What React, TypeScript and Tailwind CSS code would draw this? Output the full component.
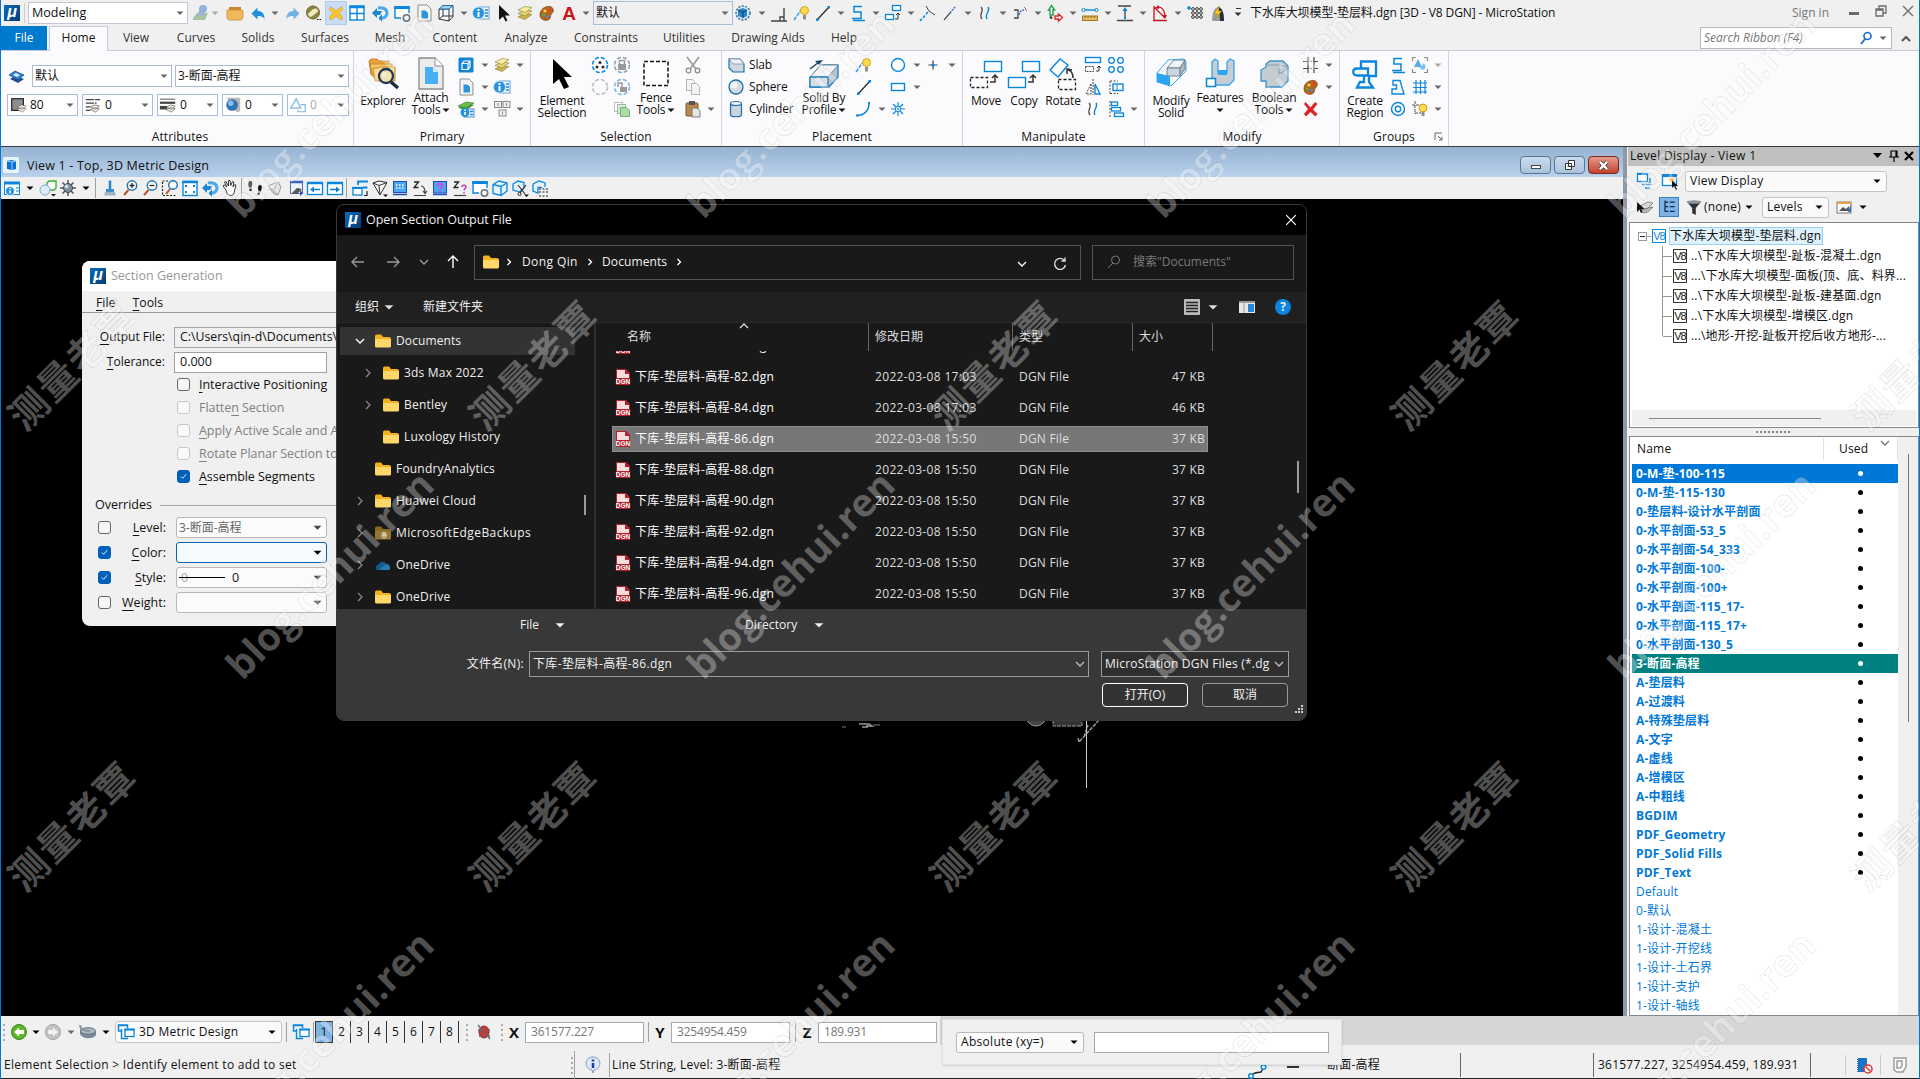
import React from 'react';

type P = { children?: React.ReactNode; className?: string };

const B = '#0a86dc';
const K = '#2b2b2b';

const shapes: Record<string, React.ReactNode> = {
  stamp: <><path d="M2 15l4-5h11l-3 7H2z" fill="#a9c2a0" /><path d="M6 13c0-3 2-3 2-6h3c0 3 2 3 2 6z" fill="#9db8cf" /><circle cx="12" cy="6" r="4" fill="#8fb4d8" /></>,
  folder: <><path d="M4 4h12v4H4z" fill="#c98a2e" /><path d="M2 7h15l1 1v7l-2 2H4l-2-2z" fill="#f0b95c" stroke="#c48a35" strokeWidth=".8" /></>,
  undo: <path d="M3.500 10.500l6-6v3.500c5 0 7 3 7 8-2-3-4-3-7-3v3.500z" fill="#1e8fdc" />,
  redo: <path d="M16.500 10.500l-6-6v3.500c-5 0-7 3-7 8 2-3 4-3 7-3v3.500z" fill="#6eb3e4" />,
  ball: <><circle cx="10" cy="9.500" r="6.500" fill="#8e8440" /><path d="M4.500 11c3-1 4-6 9-5.500l2 3c-3 1-5 5-8.500 5.500z" fill="#eee9c0" /><path d="M14 16.500h1.500M16.500 16.500H18" stroke="#111" strokeWidth="1.200" /><circle cx="10" cy="9.500" r="6.500" fill="none" stroke="#6b6224" /></>,
  bigx: <path d="M5 4l5 4 5-4 2 2-4 4 4 5-2 2-5-4-5 4-2-2 4-5-4-4z" fill="#ffc52e" stroke="#d69a1a" strokeWidth=".7" />,
  grid4: <><rect x="3" y="3" width="14" height="14" fill="#fff" stroke={B} strokeWidth="1.400" /><path d="M10 3v14M3 10.500h14" stroke={B} strokeWidth="1.400" /><path d="M2.500 4h15" stroke={B} strokeWidth="2.500" /></>,
  rotate: <><path d="M8 5c5-1 9 1 9 5 0 4-4 6-8 5" fill="none" stroke="#4aaae8" strokeWidth="3" /><path d="M2 10l5-5v3h5l-2 4H7v3z" fill="#1c86d2" /><path d="M12 11l-3 4 3 4z" fill="#1c86d2" /></>,
  winring: <><path d="M17 10V4H3v11h6" fill="#fff" stroke={B} strokeWidth="1.400" /><path d="M2.300 4.500h15.400" stroke={B} strokeWidth="3" /><circle cx="14.500" cy="15" r="3.200" fill="#f4f4f4" stroke="#6d7378" strokeWidth="1.500" /></>,
  doc: <><path d="M4 2h9l4 4v12H4z" fill="#f4f4f2" stroke="#8d8d8d" /><path d="M7.500 7.500h4l2.500 2.500v5.500H7.500z" fill="#2a94dc" /></>,
  cube: <><path d="M3 6l4-4h10v12l-4 4H3z" fill="#f4f9fc" /><path d="M3 6h10v12M13 6l4-4M3 6v10l10 2M7 2v11h10M3 16l4-3" fill="none" stroke="#333" /><path d="M3 6l4-3.500h10L13 6z" fill="#9fd2f0" stroke="#1f6ea8" /><path d="M17 2.500v11L13 18" fill="none" stroke="#333" /></>,
  info: <><rect x="8" y="4" width="10" height="12" fill="#fff" stroke="#5f9fd0" /><path d="M14 7h3M14 10h3M14 13h3" stroke={B} strokeWidth="1.500" /><circle cx="7.500" cy="10" r="6" fill="#2a92dc" stroke="#bfe0f6" /><path d="M7.500 9v5M7.500 6v2" stroke="#fff" strokeWidth="2" /></>,
  cursor: <path d="M5 2v15l4-3.500 2.500 5 2-1-2.500-5h5z" fill="#111" />,
  layers: <><path d="M3 14l7-3.500 7 1-7 5z" fill="#c9b654" stroke="#8a7b2c" strokeWidth=".6" /><path d="M3 10.500L10 7l7 1-7 5z" fill="#e6d67a" stroke="#8a7b2c" strokeWidth=".6" /><path d="M3 7l7-3.500 7 1-7 5z" fill="#f8eea2" stroke="#8a7b2c" strokeWidth=".6" /></>,
  palette: <><path d="M3 12c0-6 5-9 10-8.500 4 1 4 5 2 7-2 1-1 3-2 5-2 3-10 2.500-10-3.500z" fill="#b8641e" stroke="#7a3c0c" strokeWidth=".7" /><circle cx="8" cy="8" r="1.600" fill="#f6d14a" /><circle cx="12.500" cy="6.500" r="1.600" fill="#e0452b" /><circle cx="6.500" cy="12" r="1.600" fill="#58a84a" /><circle cx="10.500" cy="13.500" r="1.600" fill="#4a86d0" /></>,
  sphereCube: <><circle cx="10" cy="10" r="7" fill="#cfe6f6" stroke="#3d6f93" strokeDasharray="2 1.500" strokeWidth="1.500" /><path d="M5 7l5-2 4 2v6l-4 2-5-2z" fill="#2b86c8" /><path d="M5 7l5 2 4-2M10 9v6" stroke="#113c60" fill="none" /></>,
  perp: <path d="M2 18h16M15 5v13M11 18v-4h4" fill="none" stroke="#444" strokeWidth="1.400" />,
  bulb: <><path d="M2 17L9 7" stroke="#2ea0ea" strokeWidth="1.500" strokeDasharray="4 1" /><circle cx="12.500" cy="7.500" r="4" fill="#ffdb4d" stroke="#c79212" strokeWidth=".8" /><path d="M11 12h3v4.500h-3z" fill="#8f8f8f" /></>,
  line: <><path d="M4 17L16 4" stroke="#222" strokeWidth="1.200" /><path d="M3 15.500h2.500v2.500H3zM14.500 3h2.500v2.500h-2.500z" fill={B} /></>,
  sshape: <path d="M14 3.500H6v5.500h7v6.500H4M5 17.500h12" fill="none" stroke={B} strokeWidth="1.500" />,
  boxes: <><rect x="9.500" y="2.500" width="8" height="5" fill="#fff" stroke={B} strokeWidth="1.300" /><rect x="2.500" y="11.500" width="8" height="5" fill="#fff" stroke={B} strokeWidth="1.300" /><path d="M12 16h3V10M13 12l2-2 2 2" fill="none" stroke="#333" /></>,
  trim: <><path d="M2 18L10 9" stroke={B} strokeDasharray="3 1.500" strokeWidth="1.500" /><path d="M8 3l3 5 6 4" fill="none" stroke="#444" /></>,
  dash: <><path d="M10 10L4 17" stroke="#555" strokeWidth="1.200" /><path d="M10 10l5-6" stroke="#3355dd" strokeWidth="1.300" strokeDasharray="2 1" /></>,
  squig: <><path d="M6 4c4 4-3 7 1 12" fill="none" stroke="#555" strokeWidth="1.400" /><path d="M13 4c3 4-4 7-1 12" fill="none" stroke={B} strokeWidth="1.400" /></>,
  bracket: <><path d="M4 7h4v8H4" fill="none" stroke="#444" strokeWidth="1.300" /><path d="M9 12c1-4 3-5 5-5" fill="none" stroke="#2d6fe0" strokeDasharray="2 1" strokeWidth="1.500" /><path d="M14 4l2 2M17 8l-2-2" stroke="#b36b45" /></>,
  axes: <><path d="M6.500 2.500l3 4.500H8v5H5V7H3.500z" fill="#fff" stroke="#1fa04c" strokeWidth="1.400" /><path d="M17.500 14.500l-4-3.500v2H10v3h3.500v2z" fill="#fff" stroke="#e0252b" strokeWidth="1.400" /><path d="M5 13.500l2 2" stroke="#333" strokeWidth="2" /></>,
  measure: <><path d="M3 7h14" stroke={B} strokeWidth="1.400" /><circle cx="3.500" cy="7" r="1.600" fill="#fff" stroke={B} /><circle cx="16.500" cy="7" r="1.600" fill="#fff" stroke={B} /><rect x="2.500" y="13" width="15" height="4.500" fill="#e6bb63" stroke="#a37526" /><path d="M5 13v2M8 13v2M11 13v2M14 13v2" stroke="#8a5f18" /></>,
  height: <><path d="M3 3h13M2 17.500h16M10 6v8" stroke="#444" strokeWidth="1.300" /><path d="M10 4l-2.500 4h5zM9 14h2v2H9z" fill={B} /></>,
  angle: <><path d="M4 3v14M4 4l11 11M3 17.500h14" fill="none" stroke="#c4161c" strokeWidth="1.300" /><path d="M7 4c5-1 8 4 8 10" fill="none" stroke="#c4161c" strokeWidth="1.200" /><path d="M13 12h4l-2 4zM5 5l4-3v4z" fill="#c4161c" /></>,
  dotsGrid: <><path d="M2 5h4M4 3v4" stroke={B} strokeWidth="1.500" />{[8, 12, 16].map((x) => [6, 10, 14].map((y) => <circle key={x + '-' + y} cx={x} cy={y} r="1.400" fill="#fff" stroke="#333" />))}</>,
  bolt: <><path d="M4 18c0-8 2-13 6-14 4 1 6 7 6 14z" fill="#9aa1a6" /><path d="M11 4c4 2 5 7 5 14h-4z" fill="#2c3034" /><path d="M11 3l-5 8h3.500l-2.500 6 6.500-9H10z" fill="#ffc928" stroke="#a27400" strokeWidth=".5" /></>,
  level: <><path d="M3 13l5-3 9 3-6 4z" fill="#224f86" /><path d="M2 9l6-4 9 4-6 5z" fill="#2c83d8" stroke="#16477c" strokeWidth=".7" /><path d="M6 9l3-2 4 2-3 2z" fill="#d8eefa" /></>,
  swatch: <><rect x="3" y="3" width="13" height="13" fill="#8d8d8d" stroke="#222" strokeWidth="1.300" /><path d="M9 15l5-2 5 1-4 4zM9 12l5-2 5 1-4 4z" fill="#f7efe4" stroke="#666" strokeWidth=".7" /></>,
  lstyle: <><path d="M2 4h16M2 8h12M2 12h5M2 16h5" stroke="#444" strokeWidth="1.300" strokeDasharray="9 1" /><path d="M7 15l5-2 5 1-4 4zM7 12l5-2 5 1-4 4z" fill="#f7efe4" stroke="#666" strokeWidth=".8" /></>,
  lweight: <><path d="M1 3.500h17" stroke="#444" /><path d="M1 7.500h17" stroke="#444" strokeWidth="2.500" /><path d="M1 13h8" stroke="#444" strokeWidth="4" /><path d="M8 15l5-2 5 1-4 4zM8 12l5-2 5 1-4 4z" fill="#f7efe4" stroke="#666" strokeWidth=".8" /></>,
  globe: <><path d="M3 2h15v15l-4 1z" fill="#b8b8b8" /><circle cx="9" cy="10" r="6.500" fill="#2f73b8" /><circle cx="7.500" cy="8" r="3" fill="#8fc0ea" /></>,
  tri: <><path d="M2 13.500L8 3l5 10.500z" fill="none" stroke="#7cb8e6" strokeWidth="1.400" /><path d="M13 9.500h5v8h-8v-2" fill="none" stroke="#7cb8e6" strokeWidth="1.300" /></>,
  viewattr: <><rect x="2.500" y="2.500" width="15" height="15" rx="1.500" fill="#1284d6" /><path d="M6 8.500h6v6H6zM6 8.500l2-2.500h6v6l-2 2.500M12 8.500L14 6" fill="none" stroke="#fff" strokeWidth="1.200" /></>,
  models: <><path d="M2 9l9-5 7 2-8 5z" fill="#4a9a3c" /><path d="M2 7l8-4 8 1-8 5z" fill="#6dbb50" stroke="#2c7a29" strokeWidth=".6" /><rect x="8" y="10" width="10" height="8" fill="#fff" stroke="#3f8cc4" /><path d="M14 12.500h3M14 15.500h3" stroke={B} strokeWidth="1.300" /><circle cx="9" cy="13.500" r="4.500" fill="#2a92dc" /><path d="M9 13v3M9 10.500v1.500" stroke="#fff" strokeWidth="1.600" /></>,
  keys: <><g fill="#f1f1f1" stroke="#888"><rect x="2.500" y="2.500" width="7" height="6" /><rect x="11" y="2.500" width="7" height="6" /><rect x="7" y="11" width="7" height="6" /></g><path d="M6 4v3M14.500 4v3M10.500 12.500v3" stroke="#888" /></>,
  selDots: <><circle cx="10" cy="10" r="7.500" fill="none" stroke={B} strokeWidth="1.600" strokeDasharray="4 2" /><circle cx="10" cy="7.500" r="1.500" fill={K} /><circle cx="7" cy="12" r="1.500" fill={K} /><circle cx="13" cy="12" r="1.500" fill={K} /></>,
  selLock: <><circle cx="10" cy="10" r="7.500" fill="none" stroke="#8aa0b0" strokeWidth="1.600" strokeDasharray="4 2" /><path d="M6 9h8v6H6z" fill="#9a9a9a" /><path d="M7.500 9V5.500h5V9" fill="none" stroke="#9a9a9a" strokeWidth="1.500" /></>,
  selNone: <circle cx="10" cy="10" r="7.500" fill="none" stroke="#b9bfc4" strokeWidth="1.600" strokeDasharray="4 2" />,
  selUnlock: <><circle cx="10" cy="10" r="7.500" fill="none" stroke="#7ab7df" strokeWidth="1.600" strokeDasharray="4 2" /><path d="M8 10h7v5H8z" fill="#999" /><path d="M6 10V6h4v4" fill="none" stroke="#999" strokeWidth="1.500" /></>,
  pasteG: <><rect x="2.500" y="3.500" width="8" height="9" fill="#fff" stroke="#b9c2bc" /><rect x="5.500" y="5.500" width="8" height="9" fill="#dcecdc" stroke="#9bbba0" /><path d="M8.500 8.500h6l3 3v6h-9z" fill="#a9dca8" stroke="#78b07a" /></>,
  cut: <><path d="M4 2l9 12M16 2L7 14" stroke="#9a9a9a" strokeWidth="1.600" /><circle cx="5.500" cy="15.500" r="2.300" fill="none" stroke="#8d8d8d" strokeWidth="1.300" /><circle cx="14.500" cy="15.500" r="2.300" fill="none" stroke="#8d8d8d" strokeWidth="1.300" /></>,
  copyG: <><path d="M3.500 2.500h6l2 2v9h-8z" fill="#f4f4f4" stroke="#b5b5b5" /><path d="M8.500 6.500h5l3 3v8h-8z" fill="#f4f4f4" stroke="#b5b5b5" /></>,
  paste: <><rect x="3" y="4" width="12" height="13" rx="1" fill="#b98a4c" stroke="#7b5524" /><rect x="6" y="2" width="6" height="4" fill="#555" /><path d="M9 9h5l3 3v6H9z" fill="#e5e5e5" stroke="#666" strokeWidth=".8" /></>,
  slab: <><path d="M3 4h11l4 5v8H7l-4-4z" fill="#cfd8df" stroke="#1f6ea8" strokeWidth="1.200" /><path d="M3 4h11l4 5H7z" fill="#eef2f5" stroke="#6a8eab" strokeWidth=".7" /></>,
  sphere: <><circle cx="10" cy="10" r="7" fill="#d3dbe1" stroke="#1f6ea8" strokeWidth="1.300" /><circle cx="8" cy="8" r="3.500" fill="#fff" opacity=".7" /></>,
  cylinder: <><path d="M4.500 4.500v11c0 3 11 3 11 0v-11" fill="#cbd4db" stroke="#1f6ea8" strokeWidth="1.200" /><ellipse cx="10" cy="4.500" rx="5.500" ry="2" fill="#eef2f5" stroke="#1f6ea8" strokeWidth="1.200" /></>,
  arc: <><path d="M3 16.500c7 0 12-5 12-12" fill="none" stroke={B} strokeWidth="1.500" /><path d="M2 15.500h2.500v2H2zM14 3h2v2.500h-2z" fill={B} /></>,
  ellipse: <circle cx="10" cy="10" r="6.500" fill="#fff" stroke={B} strokeWidth="1.400" />,
  rect: <rect x="3.500" y="6.500" width="13" height="7" fill="#fff" stroke={B} strokeWidth="1.400" />,
  plus: <><path d="M10 5.500v9M5.500 10h9" stroke="#444" strokeWidth="1.200" /><circle cx="10" cy="10" r="1.600" fill={B} /></>,
  spark: <><path d="M10 3v14M3 10h14M5 5l10 10M15 5L5 15" stroke={B} strokeWidth="1.200" /><circle cx="10" cy="10" r="2.600" fill="#fff" stroke={B} /><circle cx="10" cy="10" r="1" fill={B} /></>,
  stretch: <><rect x="2.500" y="2.500" width="15" height="5" fill="#fff" stroke={B} strokeWidth="1.400" /><rect x="2.500" y="11.500" width="8" height="5" fill="none" stroke="#444" strokeDasharray="2 1" /><path d="M13 16h3v-5M14 13l2-2 2 2" stroke="#333" fill="none" /></>,
  array: <g fill="#fff" stroke={B} strokeWidth="1.300"><circle cx="5.500" cy="5.500" r="2.800" /><circle cx="14.500" cy="5.500" r="2.800" /><circle cx="5.500" cy="14.500" r="2.800" /><circle cx="14.500" cy="14.500" r="2.800" /></g>,
  mirror: <><path d="M8 7v10H3z" fill="none" stroke="#444" strokeDasharray="2 1" /><path d="M10 2v16" stroke="#444" strokeDasharray="2 1" /><path d="M12 7v10h5z" fill="#fff" stroke={B} strokeWidth="1.400" /></>,
  fencebox: <><path d="M4 4v13M4 4h8M4 16.500h8" stroke="#444" strokeDasharray="2 1.500" fill="none" /><rect x="7" y="7" width="10" height="6.500" fill="#fff" stroke={B} strokeWidth="1.400" /><path d="M11 7v6" stroke={B} /></>,
  align: <><path d="M4 2v16" stroke="#444" strokeDasharray="2 1.500" /><g fill="#fff" stroke={B} strokeWidth="1.300"><rect x="5.500" y="3" width="6" height="3.500" /><rect x="5.500" y="8.500" width="9" height="3.500" /><rect x="8.500" y="14" width="9" height="3.500" /></g></>,
  crossT: <><path d="M2 6.500h5M13 6.500h4M2 13.500h5M13 13.500h4M7 2v16M13 2v16" stroke="#444" strokeWidth="1.200" /><path d="M7 6.500h6M7 13.500h6" stroke="#777" strokeDasharray="1.500 1" /></>,
  redx: <path d="M4.500 3l5 5.500L14 3l2.500 2-4.500 5.500 4.500 4.500-2 2.500-5-4.500-4.500 4.500-2-2.500 4-5-4-5z" fill="#df2222" />,
  poly: <path d="M5 3.500h7l4 13.500H4v-5h4.500V8H5z" fill="none" stroke={B} strokeWidth="1.400" />,
  rings: <><circle cx="10" cy="10" r="6.500" fill="none" stroke={B} strokeWidth="1.400" /><circle cx="10" cy="10" r="2.700" fill="none" stroke={B} strokeWidth="1.400" /></>,
  dropG: <><path d="M2.500 6V2.500H6M14 2.500h3.500V6M2.500 14v3.500H6M14 17.500h3.500V14" fill="none" stroke="#8a8a8a" strokeWidth="1.200" /><path d="M8 4l4 8H4z" fill="#54aee4" /><path d="M9 12c2-1 4-2 4-4 4 2 3 7-1 7z" fill="#7cc3ec" /></>,
  hash: <path d="M6 3v14M10.500 3v14M15 3v14M3 6h14M3 10.500h14M3 15h14" stroke={B} strokeWidth="1.200" />,
  bulbG: <><path d="M2 6h9M5 2v13M5 14h6" stroke="#555" strokeDasharray="3 1" fill="none" /><circle cx="13" cy="9" r="4" fill="#ffdb4d" stroke="#c79212" strokeWidth=".8" /><path d="M11.500 13h3v4h-3z" fill="#8f8f8f" /></>,
  vinfo: <><rect x="2.500" y="4.500" width="15" height="12" fill="#fff" stroke={B} /><path d="M2 5h16" stroke={B} strokeWidth="3" /><circle cx="8" cy="13" r="4.500" fill="#2a92dc" stroke="#fff" strokeWidth=".8" /><path d="M8 12.500v3M8 10v1.300" stroke="#fff" strokeWidth="1.500" /><path d="M14 10h3M14 13h3" stroke={B} /></>,
  shapesG: <><path d="M9 5l2-2h7v7l-2 2H9z" fill="#fff" stroke="#3fae35" strokeWidth="1.400" /><circle cx="7" cy="12" r="5" fill="#dcebf5" stroke="#6fb0da" /><path d="M13 16h5l-2.500 2.500z" fill="#111" /></>,
  sun: <><path d="M10 2v16M2 10h16M4.500 4.500l11 11M15.500 4.500l-11 11" stroke="#555" strokeWidth="1.500" /><circle cx="10" cy="10" r="4.500" fill="#7d8e9c" stroke="#333" strokeWidth=".8" /><circle cx="8.500" cy="8.500" r="2" fill="#cfdde6" /></>,
  brush: <><path d="M10 2.500v9" stroke="#2487cc" strokeWidth="2.500" /><path d="M6 11h8v4H6z" fill="#3c8fc8" /><path d="M5 14h10l1 3.500H4z" fill="#9cb8c8" /></>,
  zin: <><path d="M4 17l4.500-5" stroke="#b5532a" strokeWidth="2" /><circle cx="12" cy="7.500" r="4.700" fill="#fff" stroke="#1874b8" strokeWidth="1.400" /><path d="M9.500 7.500h5M12 5v5" stroke="#222" strokeWidth="1.300" /></>,
  zout: <><path d="M4 17l4.500-5" stroke="#b5532a" strokeWidth="2" /><circle cx="12" cy="7.500" r="4.700" fill="#fff" stroke="#1874b8" strokeWidth="1.400" /><path d="M9.500 7.500h5" stroke="#222" strokeWidth="1.300" /></>,
  zwin: <><path d="M2.500 4v13.500H16M2.500 3H8" fill="none" stroke="#222" strokeDasharray="2 1.500" strokeWidth="1.200" /><path d="M6 16l4-5" stroke="#b5532a" strokeWidth="2" /><circle cx="13" cy="7" r="4.300" fill="#fff" stroke="#1874b8" strokeWidth="1.400" /></>,
  fit: <><rect x="3" y="3.500" width="14" height="14" fill="#fff" stroke={B} strokeWidth="1.400" /><path d="M2.300 4h15.400" stroke={B} strokeWidth="2.500" /><path d="M5 8h2M13 8h2M5 14h2M13 14h2" stroke={B} strokeWidth="2" /></>,
  hand: <path d="M6 12L3 8l1-1.200 3 2.200-2.500-5 1.300-.7L8.500 8V2.500H10L10.800 7.500l1.700-4 1.300.5-.8 5 1.800-2.500 1.200.8-1.500 5.500c0 3-1.500 4.700-4 4.700-3 0-4-3-4.500-5.500z" fill="#fff" stroke="#222" strokeWidth=".9" />,
  feet: <><path d="M5 3c2.500 0 2.700 3.500 1.500 6.500H4C3 7 3 3 5 3zM4.500 10.500H7L6.500 13h-2z" fill="#111" /><path d="M15 7c2.500 0 2 3.500.8 6.500h-2.500c-.5-3-.5-6.500 1.700-6.500zM12.800 14.500h2.500l-1 2.500h-2z" fill="#111" /></>,
  fly: <path d="M3 8l10-4 3 5-3 8-4-1zM3 8l10 9M13 4l-4 7" fill="#e4e4e4" stroke="#999" />,
  nav: <><rect x="5.500" y="3.500" width="12" height="12" fill="#eef4fa" stroke="#5b6fa8" /><path d="M5 4h13" stroke="#3b62c4" strokeWidth="2.500" /><path d="M7 15l5-5 5 1-5 5z" fill="#555" /><path d="M15 12l3 3-3 3z" fill="#2a4fc0" /></>,
  prev: <><rect x="2.500" y="5" width="15" height="11.500" fill="#fff" stroke={B} strokeWidth="1.300" /><path d="M2 5h16" stroke={B} strokeWidth="2.500" /><path d="M5 11.500l4-3v2.200h6v1.600H9v2.200z" fill="#117fce" /></>,
  next: <><rect x="2.500" y="5" width="15" height="11.500" fill="#fff" stroke={B} strokeWidth="1.300" /><path d="M2 5h16" stroke={B} strokeWidth="2.500" /><path d="M15 11.500l-4-3v2.200H5v1.600h6v2.200z" fill="#117fce" /></>,
  copyview: <><path d="M8 7V3.500h9.500M8 3.500h10M13 9.500h4.500" fill="none" stroke={B} strokeWidth="1.800" /><rect x="3" y="9.500" width="9" height="7.500" fill="#fff" stroke={B} strokeWidth="1.300" /><path d="M2.300 10h10.400" stroke={B} strokeWidth="2" /><path d="M14 17.500h3V13" stroke="#222" fill="none" strokeWidth="1.200" /></>,
  persp: <><path d="M3 5l6-2 8 1.500L10 17z" fill="#f8f8f8" stroke="#333" /><path d="M3 5l6 2.500 8-3M9 7.500L10 17" fill="none" stroke="#333" /><path d="M13 16.500h5L15.500 19z" fill="#111" /></>,
  calc: <><rect x="3.500" y="3.500" width="13" height="11" fill="#4aa6f0" stroke="#1c4fb8" /><path d="M6 7h8M6 10h8" stroke="#fff" strokeDasharray="1.500 1.500" strokeWidth="1.300" /><path d="M3 16.500h14" stroke="#1c4fb8" strokeWidth="1.500" /></>,
  z1: <><path d="M4 4h4.500L4 9.500h4.500" fill="none" stroke="#222" strokeWidth="1.300" /><path d="M11 8c3 0 4 2 4 7M13 13l2 2.500 2-2.500M4 17.500h12" fill="none" stroke="#444" strokeWidth="1.200" /></>,
  qbox: <><rect x="3.500" y="3.500" width="13" height="11.500" fill="#4aa6f0" stroke="#1c4fb8" /><path d="M7.500 7.500c0-2.500 5-2.500 5 0 0 2-2.500 1.800-2.500 3.500M10 12.500v1.500" fill="none" stroke="#e83ad0" strokeWidth="1.800" /><path d="M3 16.500h14" stroke="#1c4fb8" strokeWidth="1.500" /></>,
  z2: <><path d="M4 4h4.500L4 9.500h4.500" fill="none" stroke="#222" strokeWidth="1.300" /><path d="M12 9c0-2.500 4-2.500 4 0 0 1.800-2 1.800-2 3.500M14 14v1.500" fill="none" stroke="#c23ab0" strokeWidth="1.500" /><path d="M4 17.500h12" stroke="#444" strokeWidth="1.200" /></>,
  boxB: <><path d="M3 6.500L9 3l8 2v8l-6 4.500-8-2z" fill="#e3f3fc" stroke={B} strokeWidth="1.300" /><path d="M3 6.500l8 2L17 5M11 8.500v9" fill="none" stroke={B} strokeWidth="1.300" /></>,
  boxCut: <><path d="M3 6l5-3 6 1.500V10l-4.500 4L3 12z" fill="#e3f3fc" stroke={B} strokeWidth="1.300" /><path d="M8 7l7 9M16 7l-6 8" stroke="#333" strokeWidth="1.200" /><circle cx="9.500" cy="16" r="1.500" fill="none" stroke="#333" /><path d="M14 16.500h5L16.500 19z" fill="#111" /></>,
  boxDash: <><path d="M3 6l6-3 6 2v4M3 6v7l5 2V9.500h4" fill="#e3f3fc" stroke={B} strokeWidth="1.300" /><path d="M9 11h9M9 14h9M9 18h9" stroke="#222" strokeDasharray="2 1.500" /></>,
  panelA: <><rect x="2.500" y="2.500" width="10" height="8" fill="#fff" stroke={B} strokeWidth="1.300" /><path d="M2 3h11" stroke={B} strokeWidth="2" /><path d="M15 7v6.500H7M15 17h-5" stroke={B} strokeWidth="1.300" fill="none" strokeDasharray="5 1" /></>,
  panelB: <><rect x="2.500" y="4.500" width="14" height="10" fill="#fff" stroke={B} strokeWidth="1.300" /><path d="M2 4.500h15" stroke={B} strokeWidth="3" /><path d="M9 8.500h6M12 5.500v6M10 6.500l4 4M14 6.500l-4 4" stroke="#f2a12c" /><path d="M12 9v8l2-2 2 4 1-.5-1.500-3.500H18z" fill="#111" /></>,
  layersC: <><path d="M5 14l8-3 5-1-5 5-4 1z" fill="#bbb" stroke="#666" strokeWidth=".7" /><path d="M5 9l8-4 5 1-5 5-7 2z" fill="#d8d8d8" stroke="#666" strokeWidth=".7" /><path d="M2 5v10l2.500-2.500L6 16l1.500-.7L6 12h3.500z" fill="#111" /></>,
  tree: <path d="M5 2v14M5 4h4M11 4h6M5 9.500h4M11 9.500h6M5 15.500h4M11 15.500h6" stroke="#0b2a4a" strokeWidth="1.500" />,
  funnel: <><path d="M2 4h16l-6 7v8l-4-2v-6z" fill="#30343a" /><ellipse cx="10" cy="4.500" rx="8" ry="2" fill="#8c949c" /></>,
  pic: <><rect x="3" y="5" width="14" height="11" fill="#fff" stroke="#777" /><path d="M3 6h14" stroke="#eda04a" strokeWidth="2" /><path d="M5 14l4-4 3 2 3-3v5z" fill="#555" /><path d="M17 7v8h-3z" fill="#2a6fd8" /></>,
  back: <><circle cx="10" cy="10" r="7.500" fill="#5fb52a" stroke="#3c7d1c" /><path d="M5 10l5-4.500V8h5v4h-5v2.500z" fill="#fff" /></>,
  fwd: <><circle cx="10" cy="10" r="7.500" fill="#c4c4c4" stroke="#a0a0a0" /><path d="M15 10l-5-4.500V8H5v4h5v2.500z" fill="#f2f2f2" /></>,
  stack: <><path d="M2 7v5c2 5 13 6 16 1V9z" fill="#7b8b97" /><ellipse cx="10" cy="9" rx="7.500" ry="3.300" fill="#a9b7c0" stroke="#66747f" /><path d="M2 3c0 5 4 6 10 6" stroke="#8494a0" strokeWidth="2" fill="none" /></>,
  viewgrp: <><path d="M5 9H2.500V3h9v3M2 3.500h10" fill="none" stroke={B} strokeWidth="1.500" /><rect x="9" y="7.500" width="9" height="7" fill="#fff" stroke={B} strokeWidth="1.300" /><path d="M8.300 7.500h10.400" stroke={B} strokeWidth="2" /><path d="M5.500 7v9.500H12" fill="none" stroke={B} strokeWidth="1.400" /></>,
  bug: <><ellipse cx="10" cy="10" rx="5" ry="6" fill="#c83a3a" stroke="#8d2a2a" /><path d="M4 3l12 14M4 8h3M13 8h3M5 14h3M13 14h3" stroke="#666" strokeWidth="1.300" /></>,
  infoB: <><path d="M10 2c9 0 9 12 1 13l-1 3-1-3C1 14 1 2 10 2z" fill="#dce9f7" stroke="#7f9ec4" /><path d="M10 8v5M10 4.500v2" stroke="#1a3f9c" strokeWidth="2.500" /></>,
  snap: <><path d="M3 15l5-3 6-1 3-5" stroke="#222" strokeWidth="1.400" fill="none" /><circle cx="4" cy="15" r="2.300" fill="#fff" stroke={B} strokeWidth="1.500" /><circle cx="16.500" cy="6" r="2.300" fill="#fff" stroke={B} strokeWidth="1.500" /></>,
  note: <><path d="M3 3h10v14H3z" fill="#1b73c4" /><path d="M3.500 3v14" stroke="#fff" strokeDasharray="1 1" /><circle cx="14" cy="14" r="4" fill="#fff" stroke="#d33" strokeWidth="1.500" /><path d="M11.500 11.500l5 5" stroke="#d33" strokeWidth="1.500" /></>,
  shield: <><path d="M4 3h12v9l-3 5H7l-3-2z" fill="#fff" stroke="#9c9c9c" strokeWidth="1.500" /><path d="M7 6h5v5l-2 2H7z" fill="none" stroke="#9c9c9c" strokeWidth="1.500" /></>,
};

const I = ({ n, className = 'h-5 w-5' }: { n: string; className?: string }) => (
  <svg viewBox="0 0 20 20" className={`shrink-0 ${className.includes('w-') ? '' : 'h-5 w-5'} ${className}`}>{shapes[n]}</svg>
);
const Arr = ({ className = 'text-[#666]' }: { className?: string }) => (
  <svg viewBox="0 0 8 8" className={`shrink-0 ${className.includes('w-[') ? '' : 'h-2 w-2'} ${className}`}><path d="M.5 2.500h7L4 6z" fill="currentColor" /></svg>
);
const Big = ({ children, className = '' }: P) => <svg viewBox="0 0 36 36" className={`h-9 w-9 shrink-0 ${className}`}>{children}</svg>;
const Mu = ({ className = '' }: { className?: string }) => (
  <div className={`flex h-4 w-4 shrink-0 items-center justify-center bg-gradient-to-br from-[#0b6cb8] to-[#063a78] font-['Liberation_Sans',sans-serif] text-[16px] leading-none font-bold text-white italic ${className}`}><span className="-mt-[3px]">μ</span></div>
);

const Combo = ({ children, className = '', arrow = 'text-[#666] mr-[3px]' }: P & { arrow?: string }) => (
  <div className={`flex shrink-0 items-center justify-between border whitespace-nowrap ${className}`}>
    <div className="flex items-center">{children}</div>
    <Arr className={arrow} />
  </div>
);

const quick: [string, string][] = [
  ['stamp', 'ml-[3px]'], ['-', 'ml-0 text-[#aaa]'], ['folder', 'ml-[6px]'], ['undo', 'ml-[3px]'], ['-', 'ml-[3px]'], ['redo', 'ml-1'], ['ball', ''],
];
const quick2: [string, string][] = [
  ['grid4', ''], ['rotate', 'ml-[3px]'], ['winring', 'ml-[2px]'], ['doc', 'ml-[2px]'], ['cube', 'ml-[2px]'], ['-', 'ml-1'], ['info', 'ml-[3px]'], ['cursor', 'ml-[3px]'], ['layers', 'ml-px'], ['palette', 'ml-[2px]'],
];
const quick3: [string, string][] = [
  ['sphereCube', ''], ['-', 'ml-[5px]'], ['perp', 'ml-[3px]'], ['bulb', 'ml-[3px]'], ['line', 'ml-px'], ['-', 'ml-1'], ['sshape', 'ml-[3px]'], ['-', 'ml-1'], ['boxes', 'ml-[3px]'], ['-', 'ml-1'], ['trim', 'ml-[3px]'], ['dash', 'ml-[2px]'], ['-', 'ml-1'], ['squig', 'ml-[3px]'], ['-', 'ml-1'], ['bracket', 'ml-[3px]'], ['-', 'ml-1'], ['axes', 'ml-[3px]'], ['-', 'ml-1'], ['measure', 'ml-[3px]'], ['-', 'ml-1'], ['height', 'ml-[3px]'], ['-', 'ml-1'], ['angle', 'ml-[3px]'], ['-', 'ml-1'], ['dotsGrid', 'ml-[3px]'], ['bolt', 'ml-[3px]'],
];
const Icons = ({ list }: { list: [string, string][] }) => (
  <>{list.map(([n, c], i) => (n === '-' ? <Arr key={i} className={c.includes('text-') ? c : `${c} text-[#666]`} /> : <I key={i} n={n} className={c} />))}</>
);

const TitleBar = () => (
  <div className="flex h-[26px] items-center">
    <Mu className="ml-[3px]" />
    <div className="ml-1 h-5 w-px bg-[#ccc]" />
    <Combo className="ml-[3px] h-[22px] w-[160px] border-[#c3c6d4] bg-white pl-[3px] text-[12.500px]">Modeling</Combo>
    <Icons list={quick} />
    <div className="ml-[2px] flex h-6 w-[22px] items-center justify-center border border-[#b4cbee] bg-[#c9dcf5]"><I n="bigx" /></div>
    <Icons list={quick2} />
    <span className="ml-[2px] w-5 text-center font-['Liberation_Sans',sans-serif] text-[19px] leading-none font-bold text-[#c8161d]">A</span>
    <Arr className="ml-[3px] text-[#666]" />
    <Combo className="ml-[3px] h-6 w-[140px] border-[#a9bcdc] bg-[#f0f0f0] pl-[2px]">默认</Combo>
    <Icons list={quick3} />
    <div className="ml-[6px] flex w-2 flex-col items-center"><div className="mb-px h-px w-[5px] bg-[#333]" /><Arr className="text-[#333]" /></div>
    <span className="ml-2 w-[310px] text-[12px] tracking-[-0.1px] whitespace-nowrap">下水库大坝模型-垫层料.dgn [3D - V8 DGN] - MicroStation</span>
    <div className="ml-auto flex items-center pr-[5px] text-[#777]">
      <span className="mr-5 text-[12px]">Sign in</span>
      <div className="mr-4 h-[3px] w-[10px] bg-[#6a6a6a]" />
      <svg viewBox="0 0 12 12" className="-mt-1 mr-[15px] h-3 w-3"><path d="M1 4h7v7H1zM4 4V1h7v7H8M1 5h7" fill="none" stroke="#6a6a6a" strokeWidth="1.300" /></svg>
      <svg viewBox="0 0 12 12" className="-mt-1 h-3 w-3"><path d="M1 1l10 10M11 1L1 11" stroke="#777" strokeWidth="1.500" /></svg>
    </div>
  </div>
);

const tabs: [string, string][] = [['View', 'w-[56px]'], ['Curves', 'w-[64px]'], ['Solids', 'w-[60px]'], ['Surfaces', 'w-[74px]'], ['Mesh', 'w-[56px]'], ['Content', 'w-[74px]'], ['Analyze', 'w-[68px]'], ['Constraints', 'w-[92px]'], ['Utilities', 'w-[64px]'], ['Drawing Aids', 'w-[104px]'], ['Help', 'w-[48px]']];

const Tabs = () => (
  <div className="flex h-[25px] border-b border-[#c9c9dd]">
    <div className="flex h-6 w-[46px] items-center justify-center bg-[#007acc] text-white">File</div>
    <div className="-mb-px ml-[2px] flex h-[25px] w-[59px] items-center justify-center border border-b-0 border-[#c9c9dd] bg-[#fbfbfd] pb-[2px]">Home</div>
    {tabs.map(([t, w]) => <div key={t} className={`flex items-center justify-center whitespace-nowrap text-[#333] ${w}`}>{t}</div>)}
    <div className="mt-px ml-auto flex h-[22px] w-[192px] items-center border border-[#b9b9b9] bg-white pl-[3px] text-[#777] italic">
      <span className="whitespace-nowrap">Search Ribbon (F4)</span>
      <svg viewBox="0 0 14 14" className="ml-auto h-[14px] w-[14px]"><circle cx="8.500" cy="5" r="3.500" fill="none" stroke="#1f6fc4" strokeWidth="1.700" /><path d="M6 8l-4 5" stroke="#1f6fc4" strokeWidth="2" /></svg>
      <Arr className="mr-1 ml-[6px] text-[#666]" />
    </div>
    <svg viewBox="0 0 12 12" className="mt-[7px] mr-[7px] ml-2 h-3 w-3"><path d="M2 8l4-4 4 4" fill="none" stroke="#555" strokeWidth="2" /></svg>
  </div>
);

const Group = ({ label, className = '', children, launcher }: P & { label: string; launcher?: boolean }) => (
  <div className={`flex flex-col border-r border-[#d3d3e2] ${className}`}>
    <div className="flex h-[75px] pt-1">{children}</div>
    <div className="mt-[3px] flex h-4 items-center justify-center">
      <span className="tracking-[0.1px]">{label}</span>
      {launcher && <svg viewBox="0 0 10 10" className="-mr-[29px] ml-[19px] h-[10px] w-[10px]"><path d="M1 8V1h7M4 4l4 4M8 5v3H5" fill="none" stroke="#666" /></svg>}
    </div>
  </div>
);
const Col = ({ children, className = '' }: P) => <div className={`flex shrink-0 flex-col gap-[2px] ${className}`}>{children}</div>;
const ACol = ({ rows, className = '' }: { rows: number[]; className?: string }) => (
  <Col className={className}>{rows.map((r, i) => <div key={i} className="flex h-5 w-2 items-center">{r ? <Arr className={r === 2 ? 'text-[#aaa]' : 'text-[#666]'} /> : null}</div>)}</Col>
);
const Cmd = ({ icon, a, b, arrow, className = '' }: { icon: React.ReactNode; a: string; b?: string; arrow?: boolean; className?: string }) => (
  <div className={`flex shrink-0 flex-col items-center ${className}`}>
    {icon}
    <div className={`flex flex-col items-center text-[12px] leading-[12px] tracking-[-0.2px] whitespace-nowrap ${arrow ? 'mt-[1px]' : 'mt-[4px]'}`}>
      <span>{a}</span>
      <span className="flex items-center gap-[2px]">{b}{arrow && <Arr className="my-[2px]" />}</span>
    </div>
  </div>
);

const Attr = ({ n, v, className, dim }: { n: string; v: string; className: string; dim?: boolean }) => (
  <Combo className={`h-[22px] border-[#a9bcdc] bg-white ${className} ${dim ? 'text-[#a8a8a8]' : ''}`}><I n={n} className="mr-[3px] ml-px h-[18px] w-[18px]" />{v}</Combo>
);

const Ribbon = () => (
  <div className="flex h-[96px] shrink-0 border-b border-[#3c3c3c] bg-[#fbfbfd]">
    <Group label="Attributes" className="w-[353px] pl-[6px]">
      <div className="flex flex-col">
        <div className="mt-[10px] flex h-[22px] items-center">
          <I n="level" />
          <Combo className="ml-[5px] h-[22px] w-[140px] border-[#a9bcdc] bg-white pl-[2px]">默认</Combo>
          <Combo className="ml-[3px] h-[22px] w-[174px] border-[#a9bcdc] bg-white pl-[2px]">3-断面-高程</Combo>
        </div>
        <div className="mt-[7px] flex gap-[4px]">
          <Attr n="swatch" v="80" className="w-[71px]" />
          <Attr n="lstyle" v="0" className="w-[71px]" />
          <Attr n="lweight" v="0" className="w-[61px]" />
          <Attr n="globe" v="0" className="w-[61px]" />
          <Attr n="tri" v="0" dim className="w-[62px]" />
        </div>
      </div>
    </Group>
    <Group label="Primary" className="w-[177px]">
      <Cmd className="w-[58px]" a="Explorer" icon={<Big><path d="M4 6l2-2h6l2 2h10v14H6z" fill="#e8a43c" stroke="#c8842a" /><path d="M5 9h22v13H8z" fill="#f7c869" stroke="#c8842a" /><path d="M8 13h5l2-1h15v14H10z" fill="#fbdc94" stroke="#c8842a" /><path d="M26 27l7 6" stroke="#1f2d3a" strokeWidth="3.500" /><circle cx="21" cy="21" r="7" fill="#f6e3b4" stroke="#1f3a50" strokeWidth="2.300" /></Big>} />
      <Cmd className="w-[38px]" a="Attach" b="Tools" arrow icon={<Big><path d="M6 3h16l8 8v23H6z" fill="#ececec" stroke="#8c8c8c" strokeWidth="1.300" /><path d="M22 3v8h8" fill="#fff" stroke="#8c8c8c" /><path d="M12 12h8l5 5v12H12z" fill="#45b0f4" /><path d="M20 12v5h5z" fill="#cfeafc" /></Big>} />
      <Col className="ml-[6px]"><I n="viewattr" /><I n="doc" /><I n="models" /></Col>
      <ACol rows={[1, 1, 1]} className="ml-[5px]" />
      <Col className="ml-[3px]"><I n="layers" /><I n="info" /><I n="keys" /></Col>
      <ACol rows={[1, 0, 1]} className="ml-1" />
    </Group>
    <Group label="Selection" className="w-[191px]">
      <Cmd className="ml-[3px] w-14" a="Element" b="Selection" icon={<Big><path d="M9 4v25l6-5 5 10 5-2-5-10h8z" fill="#000" /></Big>} />
      <Col><I n="selDots" /><I n="selNone" /></Col>
      <Col className="ml-[2px]"><I n="selLock" /><I n="selUnlock" /><I n="pasteG" /></Col>
      <Cmd className="w-12" a="Fence" b="Tools" arrow icon={<Big><rect x="6" y="6.500" width="24" height="24" fill="#fff" stroke="#111" strokeWidth="1.500" strokeDasharray="4 2" /></Big>} />
      <Col className="ml-[3px]"><I n="cut" /><I n="copyG" /><I n="paste" /></Col>
      <ACol rows={[0, 0, 1]} className="ml-1" />
    </Group>
    <Group label="Placement" className="w-[241px]">
      <Col className="ml-1 w-[71px]">
        {[['slab', 'Slab'], ['sphere', 'Sphere'], ['cylinder', 'Cylinder']].map(([n, t]) => <div key={n} className="flex h-5 items-center gap-[3px] tracking-[-0.2px]"><I n={n} />{t}</div>)}
      </Col>
      <Cmd className="w-[54px]" a="Solid By" b="Profile" arrow icon={<Big><path d="M4 23l11-13h17v12l-9 10H4z" fill="#b9c2c9" stroke="#1f7fc0" strokeWidth="1.300" /><path d="M4 22l11-12h17L22 22z" fill="#f3f5f6" stroke="#7b8b97" /><path d="M4 22h18v10H4z" fill="#d9e0e5" stroke="#1f7fc0" strokeWidth="1.300" /><path d="M4 14L13 7" stroke="#1c4666" strokeWidth="1.500" /><path d="M17 5l-4 5-4-4z" fill="#1c4666" /></Big>} />
      <Col className="ml-[3px]"><I n="bulb" /><I n="line" /><I n="arc" /></Col>
      <ACol rows={[0, 0, 1]} className="ml-1" />
      <Col className="ml-[2px]"><I n="ellipse" /><I n="rect" /><I n="spark" /></Col>
      <ACol rows={[1, 1, 0]} className="ml-[5px]" />
      <Col className="ml-[2px]"><I n="plus" /></Col>
      <ACol rows={[1, 0, 0]} className="ml-[5px]" />
    </Group>
    <Group label="Manipulate" className="w-[182px]">
      <Cmd className="ml-1 w-[38px]" a="Move" icon={<Big><rect x="16.500" y="6.500" width="17" height="10" fill="#fff" stroke={B} strokeWidth="1.400" /><rect x="2.500" y="22.500" width="17" height="10" fill="none" stroke="#222" strokeWidth="1.300" strokeDasharray="3 2" /><path d="M22 27h5v-7M24 23l3-3 3 3" fill="none" stroke="#333" strokeWidth="1.500" /></Big>} />
      <Cmd className="w-[38px]" a="Copy" icon={<Big><rect x="16.500" y="6.500" width="17" height="10" fill="#fff" stroke={B} strokeWidth="1.400" /><rect x="2.500" y="22.500" width="17" height="10" fill="#fff" stroke={B} strokeWidth="1.400" /><path d="M22 27h5v-7M24 23l3-3 3 3" fill="none" stroke="#333" strokeWidth="1.500" /></Big>} />
      <Cmd className="w-10" a="Rotate" icon={<Big><path d="M5 15L15 4l8 6-10 12z" fill="#fff" stroke={B} strokeWidth="1.400" /><rect x="13.500" y="24.500" width="17" height="10" fill="none" stroke="#222" strokeWidth="1.300" strokeDasharray="3 2" /><path d="M23 15c4 1 5 4 5 8M22 19l0-5 5 1" fill="none" stroke="#333" strokeWidth="1.500" /></Big>} />
      <Col><I n="stretch" /><I n="mirror" /><I n="squig" /></Col>
      <Col className="ml-[3px]"><I n="array" /><I n="fencebox" /><I n="align" /></Col>
      <ACol rows={[0, 0, 1]} className="ml-1" />
    </Group>
    <Group label="Modify" className="w-[195px]">
      <Cmd className="ml-1 w-11" a="Modify" b="Solid" icon={<Big><path d="M4 18L15 5l16-1 2 3v9L18 31 4 27z" fill="#f4fafe" stroke="#3aa3ea" /><path d="M4 18l13 3v10L4 27z" fill="#2ba4f5" /><path d="M14 13l7-8h11l-5 8z" fill="#f2f4f5" stroke="#6e8596" /><path d="M14 13h13v8H14z" fill="#cdd6dd" stroke="#6e8596" /><path d="M27 13l5-8v9l-5 7z" fill="#aab6bf" stroke="#6e8596" /></Big>} />
      <Cmd className="w-[54px]" a="Features" arrow icon={<Big><path d="M10 7l3-3 3 2v12h9V7l3-3 4 2v19l-5 5H10z" fill="#c5ced5" stroke="#3aa3ea" strokeWidth="1.300" /><path d="M16 15h9v5h-9z" fill="#2ba4f5" /><rect x="4.500" y="23.500" width="9" height="8" fill="#fff" stroke={B} strokeWidth="1.500" /></Big>} />
      <Cmd className="w-[54px]" a="Boolean" b="Tools" arrow icon={<Big><path d="M10 9l4-3h13l5 5v15l-6 6H10v-6H5V15l5-3z" fill="#c3ccd3" stroke="#3a94cc" strokeWidth="1.300" /><path d="M10 10h13l9 2M23 10v9M23 19l9-5" fill="none" stroke="#8899a5" /></Big>} />
      <Col><I n="crossT" /><I n="palette" /><I n="redx" /></Col>
      <ACol rows={[1, 1, 0]} className="ml-1" />
    </Group>
    <Group label="Groups" className="w-[109px]" launcher>
      <Cmd className="ml-[2px] w-[46px]" a="Create" b="Region" icon={<Big><path d="M14 13V6.500h15V21h-7v6l4 5.500H10l3-5.500h4v-6" fill="none" stroke={B} strokeWidth="2.300" /><path d="M21 13.500v7H10c-5 0-5-7 0-7z" fill="none" stroke={B} strokeWidth="2.300" /></Big>} />
      <Col><I n="sshape" /><I n="poly" /><I n="rings" /></Col>
      <Col className="ml-[2px]"><I n="dropG" /><I n="hash" /><I n="bulbG" /></Col>
      <ACol rows={[2, 1, 1]} className="ml-1" />
    </Group>
  </div>
);

const winBtn = 'flex h-[18px] w-[31px] items-center justify-center rounded-sm border';
const ViewTitle = () => (
  <div className="flex h-[30px] shrink-0 items-center bg-gradient-to-b from-[#97b3d2] to-[#b8d1ec] pt-[6px]">
    <svg viewBox="0 0 16 16" className="ml-[2px] h-4 w-4"><rect width="16" height="16" rx="2" fill="#e8f3fb" /><path d="M4 4l4-1 5 1v8l-4 1-5-1z" fill="#0f6fd0" /><path d="M4 4l5 1 4-1M9 5v8" stroke="#8cd0ff" fill="none" /></svg>
    <span className="mt-[2px] ml-2 text-[12.500px] tracking-[0.2px]">View 1 - Top, 3D Metric Design</span>
    <div className="ml-auto flex gap-[3px] pr-[4px]">
      <div className={`${winBtn} border-[#5d7591] bg-gradient-to-b from-[#c9dbee] to-[#a9c3de]`}><div className="mt-1 h-1 w-[10px] border border-[#444] bg-white" /></div>
      <div className={`${winBtn} border-[#5d7591] bg-gradient-to-b from-[#c9dbee] to-[#a9c3de]`}><svg viewBox="0 0 12 12" className="h-3 w-3"><path d="M4.500 1.500h6v6h-6z M1.500 4.500h6v6h-6zM3.500 7h2" fill="#fff" stroke="#333" /></svg></div>
      <div className={`${winBtn} border-[#7a2a20] bg-gradient-to-b from-[#e39a8a] to-[#c3402c]`}><svg viewBox="0 0 12 12" className="h-[11px] w-[11px]"><path d="M2 2l8 8M10 2l-8 8" stroke="#333" strokeWidth="4" /><path d="M2 2l8 8M10 2l-8 8" stroke="#fff" strokeWidth="2.500" /></svg></div>
    </div>
  </div>
);

const Sep = ({ className = 'h-5 bg-[#a0a0a0]' }: { className?: string }) => <div className={`w-px shrink-0 ${className.includes('h-') ? '' : 'h-5'} ${className.includes('bg-') ? '' : 'bg-[#a0a0a0]'} ${className}`} />;

const ViewTools = () => (
  <div className="flex h-[22px] shrink-0 items-center bg-[#f0f0f0]">
    <I n="vinfo" className="ml-px" /><Arr className="ml-1 text-black" />
    <I n="shapesG" className="ml-[4px]" /><I n="sun" /><Arr className="ml-1 text-black" />
    <Sep className="ml-[5px]" />
    <div className="ml-[4px] flex">{['brush', 'zin', 'zout', 'zwin', 'fit', 'rotate', 'hand'].map((n) => <I key={n} n={n} />)}</div>
    <Sep className="ml-px" />
    <div className="ml-[3px] flex">{['feet', 'fly', 'nav', 'prev', 'next'].map((n) => <I key={n} n={n} />)}</div>
    <Sep className="ml-px" />
    <div className="ml-[3px] flex">{['copyview', 'persp', 'calc', 'z1', 'qbox', 'z2', 'winring', 'boxB', 'boxCut', 'boxDash'].map((n) => <I key={n} n={n} />)}</div>
  </div>
);

const Check = ({ on, dim }: { on?: boolean; dim?: boolean }) => (
  <div className={`flex h-[13px] w-[13px] shrink-0 items-center justify-center rounded-[3px] border ${on ? 'border-[#005fb8] bg-[#005fb8]' : dim ? 'border-[#c8c8c8] bg-[#fafafa]' : 'border-[#666] bg-[#f6f6f6]'}`}>
    {on && <svg viewBox="0 0 10 10" className="h-[9px] w-[9px]"><path d="M2 5l2 2 4-4.500" fill="none" stroke="#fff" /></svg>}
  </div>
);
const U = ({ children }: P) => <span className="underline decoration-1 underline-offset-[3px]">{children}</span>;

const Over = ({ on, label, children, className = 'border-[#b8b8b8] bg-[#fbfbfb]', arrow = 'text-[#444]' }: P & { on?: boolean; label: string; arrow?: string }) => (
  <div className="flex h-[25px] shrink-0 items-center pl-4">
    <Check on={on} />
    <span className="mr-[10px] ml-auto"><U>{label[0]}</U>{label.slice(1)}:</span>
    <div className={`mr-[10px] flex h-[21px] w-[151px] shrink-0 items-center rounded-[3px] border pr-1 pl-[2px] ${className}`}>{children}<Arr className={`ml-auto h-[9px] w-[9px] ${arrow}`} /></div>
  </div>
);

const SectionDialog = () => (
  <div className="absolute top-[62px] left-[81px] flex h-[365px] w-[255px] flex-col overflow-hidden rounded-l-lg bg-[#f0f0f0] text-[12.500px] whitespace-nowrap">
    <div className="flex h-[30px] shrink-0 items-center bg-white pl-2 text-[#999]"><Mu className="mr-[5px]" />Section Generation</div>
    <div className="flex h-[22px] shrink-0 items-center gap-[17px] border-b border-[#999] pt-[3px] pl-[14px] text-[12.300px]"><span><U>F</U>ile</span><span><U>T</U>ools</span></div>
    <div className="mt-[13px] flex h-[22px] shrink-0 items-center"><span className="w-[83px] shrink-0 text-right text-[12px]"><U>O</U>utput File:</span><div className="ml-[9px] flex h-[21px] w-[190px] shrink-0 items-center border border-[#a5a5b0] pl-[5px] text-[12.300px]">C:\Users\qin-d\Documents\</div></div>
    <div className="mt-[3px] flex h-[22px] shrink-0 items-center"><span className="w-[83px] shrink-0 text-right text-[12px]"><U>T</U>olerance:</span><div className="ml-[9px] flex h-[21px] w-[153px] shrink-0 items-center border border-[#a0a0a0] bg-white pl-[5px]">0.000</div></div>
    <div className="flex shrink-0 flex-col pl-[95px] tracking-[-0.05px]">
      <div className="flex h-[23px] items-center gap-[9px]"><Check /><span><U>I</U>nteractive Positioning</span></div>
      <div className="flex h-[23px] items-center gap-[9px] text-[#808080]"><Check dim /><span>Flatte<U>n</U> Section</span></div>
      <div className="flex h-[23px] items-center gap-[9px] text-[#808080]"><Check dim /><span><U>A</U>pply Active Scale and Angle</span></div>
      <div className="flex h-[23px] items-center gap-[9px] text-[#808080]"><Check dim /><span><U>R</U>otate Planar Section to</span></div>
      <div className="flex h-[23px] items-center gap-[9px]"><Check on /><span><U>A</U>ssemble Segments</span></div>
    </div>
    <div className="mt-[6px] flex h-[22px] shrink-0 items-center gap-2 pl-[13px]">Overrides<div className="h-px flex-1 bg-[#a5a5a5]" /></div>
    <div className="-mt-px flex flex-col">
      <Over label="Level"><span className="text-[12px] text-[#666]">3-断面-高程</span></Over>
      <Over label="Color" on className="border-[#0a64ad] bg-[#f5faff]" arrow="text-black" />
      <Over label="Style" on><div className="flex items-center"><span className="w-0 text-[#aaa]"><span className="ml-[2px]">0</span></span><div className="h-px w-[46px] bg-black" /><span className="ml-[7px]">0</span></div></Over>
      <Over label="Weight" />
    </div>
  </div>
);

const Fold = ({ kind = 'f' }: { kind?: string }) =>
  kind === 'c' ? (
    <svg viewBox="0 0 16 16" className="h-4 w-4 shrink-0"><path d="M1 11c0-3 2-3 3-4 2-3 6-3 7 0 3 0 4 2 4 4s-1 2-2 2H3c-1 0-2 0-2-2z" fill="#0f5c94" /><path d="M4 13l7-6c3 0 4 2 4 4s-1 2-2 2z" fill="#2a7cac" /></svg>
  ) : (
    <svg viewBox="0 0 16 16" className="h-4 w-4 shrink-0"><path d="M0 3q0-1.500 1.500-1.500H6L8 4h6q2 0 2 2v2H0z" fill={kind === 'd' ? '#8a6a20' : '#f5b01e'} /><path d="M0 6h16v7q0 1.500-1.500 1.500h-13Q0 14.500 0 13z" fill={kind === 'd' ? '#947735' : '#ffd76a'} />{kind === 'd' && <circle cx="9" cy="9" r="2.500" fill="#c8b070" />}</svg>
  );
const Chev = ({ d = 'r', className = 'text-[#999]' }: { d?: string; className?: string }) => (
  <svg viewBox="0 0 10 10" className={`h-[10px] w-[10px] shrink-0 ${className}`}><path d={d === 'r' ? 'M3 1l4 4-4 4' : d === 's' ? 'M3.500 2l3 3-3 3' : d === 'd' ? 'M1 3l4 4 4-4' : 'M1 7l4-4 4 4'} fill="none" stroke="currentColor" strokeWidth="1.300" /></svg>
);

const nodes: [string, number, string, string][] = [
  ['3ds Max 2022', 1, 'r', 'f'], ['Bentley', 1, 'r', 'f'], ['Luxology History', 1, '', 'f'], ['FoundryAnalytics', 0, '', 'f'], ['Huawei Cloud', 0, 'r', 'f'], ['MicrosoftEdgeBackups', 0, 'r', 'd'], ['OneDrive', 0, 'r', 'c'], ['OneDrive', 0, 'r', 'f'],
];
const files: [string, string, string][] = [
  ['80', '17:03', '47'], ['82', '17:03', '47'], ['84', '17:03', '46'], ['86', '15:50', '37'], ['88', '15:50', '37'], ['90', '15:50', '37'], ['92', '15:50', '37'], ['94', '15:50', '37'], ['96', '15:50', '37'],
];

const Dgn = () => (
  <svg viewBox="0 0 16 16" className="h-4 w-4 shrink-0"><path d="M1 0h10l4 4v12H1z" fill="#b5202a" /><path d="M2 1h8v4h4v4H2z" fill="#f6dede" /><text x="8" y="15" textAnchor="middle" fontSize="6.500" fontWeight="bold" fill="#fff" fontFamily="Liberation Sans">DGN</text></svg>
);

const FileDialog = () => (
  <div className="absolute top-[5px] left-[335px] flex h-[517px] w-[971px] flex-col overflow-hidden rounded-lg border border-[#3a3a3a] bg-[#191919] text-[12px] whitespace-nowrap text-[#f0f0f0]">
    <div className="flex h-[30px] shrink-0 items-center bg-black pl-2 text-[12.500px]"><Mu className="mr-[5px]" />Open Section Output File
      <svg viewBox="0 0 10 10" className="mr-[10px] ml-auto h-[10px] w-[10px]"><path d="M0 0l10 10M10 0L0 10" stroke="#fff" strokeWidth="1.200" /></svg>
    </div>
    <div className="flex h-[57px] shrink-0 items-center pb-[3px]">
      <svg viewBox="0 0 14 14" className="ml-[14px] h-[14px] w-[14px]"><path d="M13 7H1M6 2L1 7l5 5" fill="none" stroke="#999" strokeWidth="1.400" /></svg>
      <svg viewBox="0 0 14 14" className="ml-[21px] h-[14px] w-[14px]"><path d="M1 7h12M8 2l5 5-5 5" fill="none" stroke="#999" strokeWidth="1.400" /></svg>
      <Chev d="d" className="ml-[19px] text-[#999]" />
      <svg viewBox="0 0 14 14" className="ml-[17px] h-[14px] w-[14px]"><path d="M7 13V1M2 6l5-5 5 5" fill="none" stroke="#fff" strokeWidth="1.400" /></svg>
      <div className="ml-[14px] flex h-[35px] w-[607px] items-center border border-[#535353] pl-2">
        <Fold /><Chev d="s" className="ml-[5px] text-white" /><span className="ml-2 w-[57px] tracking-[0.4px]">Dong Qin</span><Chev d="s" className="ml-[6px] text-white" /><span className="ml-[7px] w-[66px] tracking-[0.1px]">Documents</span><Chev d="s" className="ml-[6px] text-white" />
        <Chev d="d" className="mt-1 mr-px ml-auto text-white" />
        <svg viewBox="0 0 14 14" className="mt-1 mr-[13px] ml-[25px] h-[14px] w-[14px]"><path d="M11.500 3.500A5.500 5.500 0 1 0 12.500 8M12 .5v3.500H8.500" fill="none" stroke="#ddd" strokeWidth="1.400" /></svg>
      </div>
      <div className="ml-[11px] flex h-[35px] w-[202px] items-center border border-[#535353] pl-[14px] text-[#7a7a7a]">
        <svg viewBox="0 0 14 14" className="mr-3 h-[14px] w-[14px]"><circle cx="8.500" cy="5" r="4" fill="none" stroke="#777" /><path d="M6 8l-5 5" stroke="#777" /></svg>搜索"Documents"
      </div>
    </div>
    <div className="flex h-[31px] shrink-0 items-center border-b border-[#2a2a2a] bg-[#202020] pl-[18px]">
      组织<Arr className="ml-[5px] h-[10px] w-[10px] text-[#ddd]" /><span className="ml-[29px]">新建文件夹</span>
      <svg viewBox="0 0 16 16" className="ml-auto h-4 w-4"><rect width="16" height="16" rx="1" fill="#bbb" /><path d="M2 3.500h12M2 6.500h12M2 9.500h12M2 12.500h12" stroke="#222" strokeWidth="1.300" /></svg>
      <Arr className="ml-2 h-[10px] w-[10px] text-[#ddd]" />
      <svg viewBox="0 0 16 12" className="ml-[21px] h-3 w-4"><rect width="16" height="12" fill="#e8e8e8" /><path d="M0 1h16" stroke="#999" strokeWidth="2" /><path d="M9 3h6v8H9z" fill="#2a86dc" /><path d="M5 2v10" stroke="#999" /></svg>
      <div className="mr-[15px] ml-5 flex h-4 w-4 items-center justify-center rounded-full bg-[#0a84e0] text-[12px] font-bold">?</div>
    </div>
    <div className="flex h-[286px] shrink-0 overflow-hidden">
      <div className="flex w-[247px] shrink-0 flex-col pt-[3px]">
        <div className="mt-px ml-[3px] flex h-7 w-[235px] shrink-0 items-center bg-[#333] pl-[15px]"><div className="flex w-5 items-center"><Chev d="d" className="text-white" /></div><Fold /><span className="ml-[5px] tracking-[0.1px]">Documents</span></div>
        <div className="mt-[2px] flex flex-col">
          {nodes.map(([t, lv, ch, k], i) => (
            <div key={i} className={`flex h-8 shrink-0 items-center ${lv ? 'pl-[26px]' : 'pl-[18px]'}`}>
              <div className="flex w-5 items-center">{ch && <Chev className="text-[#888]" />}</div><Fold kind={k} /><span className={`ml-[5px] ${i === 5 ? 'tracking-[0.4px]' : 'tracking-[0.2px]'}`}>{t}</span>
            </div>
          ))}
        </div>
      </div>
      <div className="mt-[172px] h-5 w-[2px] bg-[#9a9a9a]" />
      <div className="ml-[8px] w-[2px] bg-[#2e2e2e]" />
      <div className="flex w-[690px] shrink-0 flex-col overflow-hidden">
        <div className="z-10 flex h-7 shrink-0 items-center bg-[#191919] text-[#ddd]">
          <div className="flex h-full w-[273px] items-center border-r border-[#666] pl-[31px]">名称<Chev d="u" className="-mt-[22px] ml-[88px]" /></div>
          <div className="flex h-full w-[144px] items-center border-r border-[#666] pl-[6px]">修改日期</div>
          <div className="flex h-full w-[120px] items-center border-r border-[#666] pl-[6px]">类型</div>
          <div className="flex h-full w-[80px] items-center border-r border-[#666] pl-[6px]">大小</div>
        </div>
        <div className="-mt-[18px] flex flex-col gap-[5px] pl-[16px]">
          {files.map(([n, t, s]) => (
            <div key={n} className={`flex h-[26px] w-[596px] shrink-0 items-center border pl-[2px] text-[#dedede] ${n === '86' ? 'border-[#8f8f8f] bg-[#777]' : 'border-transparent'}`}>
              <Dgn /><span className="ml-[4px] w-[240px] tracking-[0.35px] text-white">下库-垫层料-高程-{n}.dgn</span><span className="w-[144px] tracking-[0.33px]">2022-03-08 {t}</span><span className="w-[100px] tracking-[0.2px]">DGN File</span><span className="mr-[2px] ml-auto tracking-[0.2px]">{s} KB</span>
            </div>
          ))}
        </div>
      </div>
      <div className="mt-[138px] ml-[11px] h-8 w-[2px] bg-[#9a9a9a]" />
    </div>
    <div className="flex flex-1 flex-col bg-[#383838]">
      <div className="flex h-8 items-center pl-[183px]"><span className="w-[35px]">File</span><Arr className="h-[10px] w-[10px]" /><span className="ml-[180px] w-[69px] tracking-[0.1px]">Directory</span><Arr className="h-[10px] w-[10px]" /></div>
      <div className="mt-[10px] flex h-[26px] items-center">
        <span className="w-[187px] text-right tracking-[0.3px]">文件名(N):</span>
        <div className="ml-[5px] flex h-[26px] w-[560px] items-center justify-between border border-[#9a9a9a] pr-[3px] pl-[3px] tracking-[0.35px]">下库-垫层料-高程-86.dgn<Chev d="d" className="text-[#bbb]" /></div>
        <div className="ml-3 flex h-[26px] w-[188px] items-center border border-[#9a9a9a] bg-[#2f2f2f] pl-[3px]"><span className="w-[165px] overflow-hidden tracking-[0.2px]">MicroStation DGN Files (*.dgn)</span><Chev d="d" className="ml-1 text-[#bbb]" /></div>
      </div>
      <div className="mt-[6px] ml-[765px] flex gap-[14px]">
        <div className="flex h-6 w-[86px] items-center justify-center rounded border border-white bg-[#333]">打开(O)</div>
        <div className="flex h-6 w-[86px] items-center justify-center rounded border border-[#999] bg-[#333]">取消</div>
        <svg viewBox="0 0 9 9" className="mt-[22px] -ml-[7px] h-[9px] w-[9px]"><path d="M6 0h2v2H6zM3 3h2v2H3zM6 3h2v2H6zM0 6h2v2H0zM3 6h2v2H3zM6 6h2v2H6z" fill="#ccc" /></svg>
      </div>
    </div>
  </div>
);

const Canvas = () => (
  <div className="relative flex-1 overflow-hidden bg-black">
    <svg viewBox="0 0 320 80" className="absolute top-[516px] left-[790px] h-20 w-80 fill-none stroke-[#999]"><path d="M14 5h2M51 12h4M82 10h7" strokeWidth=".8" /><path d="M68 9h10l3 2h-6M71 12h6" strokeWidth="1.500" /><circle cx="245" cy="1" r="10" fill="#444" /><path d="M262 5v6h29V5z" fill="#333" strokeDasharray="4 1" /><path d="M308 5L288 27l-1-4M293 22l4-12" strokeDasharray="4 1" strokeWidth="1.500" /><path d="M295.500 0v73" stroke="#ccc" /></svg>
    <SectionDialog />
    <FileDialog />
  </div>
);

const trees = ['..\\下水库大坝模型-趾板-混凝土.dgn', '...\\下水库大坝模型-面板(顶、底、料界...', '..\\下水库大坝模型-趾板-建基面.dgn', '..\\下水库大坝模型-增模区.dgn', '...\\地形-开挖-趾板开挖后收方地形-...'];
const bold = ['0-M-垫-100-115', '0-M-垫-115-130', '0-垫层料-设计水平剖面', '0-水平剖面-53_5', '0-水平剖面-54_333', '0-水平剖面-100-', '0-水平剖面-100+', '0-水平剖面-115_17-', '0-水平剖面-115_17+', '0-水平剖面-130_5', '3-断面-高程', 'A-垫层料', 'A-过渡料', 'A-特殊垫层料', 'A-文字', 'A-虚线', 'A-增模区', 'A-中粗线', 'BGDIM', 'PDF_Geometry', 'PDF_Solid Fills', 'PDF_Text'];
const plain = ['Default', '0-默认', '1-设计-混凝土', '1-设计-开挖线', '1-设计-土石界', '1-设计-支护', '1-设计-轴线'];

const V8 = ({ main }: { main?: boolean }) => (
  <div className={`flex h-[14px] w-[14px] shrink-0 items-center justify-center border bg-white font-['Liberation_Sans',sans-serif] text-[11px] leading-none tracking-[-1px] ${main ? 'border-[#0a86dc] text-[#0a86dc]' : 'border-[#333]'}`}>V8</div>
);

const LevelPanel = () => (
  <div className="flex w-[296px] shrink-0 flex-col border-l-4 border-[#8d99a5] bg-[#f0f0f0] whitespace-nowrap">
    <div className="ml-px flex h-[19px] shrink-0 items-center bg-[#bfbfbf] pb-px pl-[2px] text-[12px] tracking-[0.35px]">Level Display - View 1
      <svg viewBox="0 0 44 14" className="mr-1 ml-auto h-[14px] w-[44px]"><path d="M2 4h9L6.500 9z" /><path d="M20 2h6v6h-6zM18 8h10M23 8v5M25 2v6" fill="none" stroke="#000" strokeWidth="1.200" /><path d="M34 3l8 8M42 3l-8 8" stroke="#000" strokeWidth="2.200" /></svg>
    </div>
    <div className="mt-[4px] flex h-[22px] shrink-0 items-center pl-2"><I n="panelA" /><I n="panelB" className="ml-[5px]" /><Combo className="ml-[5px] h-[21px] w-[202px] rounded-[3px] border-[#c4c4c4] bg-[#fafafa] pl-1 tracking-[0.3px]" arrow="text-black mr-[5px]">View Display</Combo></div>
    <div className="mt-[4px] flex h-[22px] shrink-0 items-center pl-2"><I n="layersC" /><div className="ml-1 flex h-5 w-5 items-center justify-center border border-[#3a7fc4] bg-[#7fb3e6]"><I n="tree" className="h-4 w-4" /></div><I n="funnel" className="ml-[6px] h-[18px] w-[18px]" /><span className="ml-px w-[37px] tracking-[0.2px]">(none)</span><Arr className="ml-[4px] text-black" />
      <Combo className="ml-[9px] h-[21px] w-[67px] rounded-[3px] border-[#c4c4c4] bg-[#fafafa] pl-1 tracking-[0.2px]" arrow="text-black mr-[5px]">Levels</Combo><I n="pic" className="ml-[5px]" /><Arr className="ml-[5px] text-black" /></div>
    <div className="mt-[4px] ml-[2px] flex h-[206px] shrink-0 flex-col border border-[#828790] bg-white pt-[3px]">
      <div className="flex h-5 items-center pl-2"><div className="flex h-[9px] w-[9px] items-center justify-center border border-[#999]"><div className="h-px w-[5px] bg-[#225]" /></div><div className="mr-px h-px w-1 bg-[#999]" /><V8 main /><span className="ml-[3px] flex h-[18px] items-center border border-[#99d1f5] bg-[#dff1fb] pr-px tracking-[0.2px]">下水库大坝模型-垫层料.dgn</span></div>
      {trees.map((t, i) => (
        <div key={t} className="flex h-5 items-center pl-8"><div className={`w-px bg-[#999] ${i === 4 ? '-mt-[10px] h-[10px]' : 'h-5'}`} /><div className="mr-px h-px w-[9px] bg-[#999]" /><V8 /><span className="ml-1 text-[12px] tracking-[0.18px]">{t}</span></div>
      ))}
      <div className="mx-[2px] mt-auto mb-px flex h-[16px] items-center bg-[#f0f0f0] pl-[17px]"><div className="h-px w-[172px] bg-[#888]" /></div>
    </div>
    <div className="flex h-2 shrink-0 items-center justify-center gap-[2px]">{Array.from({ length: 9 }, (_, i) => <div key={i} className="h-[2px] w-[2px] bg-[#888]" />)}</div>
    <div className="ml-[2px] flex min-h-0 flex-1 border border-[#828790] bg-white">
      <div className="flex w-[268px] flex-col">
        <div className="flex h-[23px] shrink-0 items-center pt-px pl-[7px] tracking-[0.2px]"><span className="w-[186px]">Name</span><div className="flex h-full flex-1 items-center border-x border-[#e2e2e2] pl-[15px]">Used<Chev d="d" className="-mt-3 ml-3 text-[#777]" /></div></div>
        <div className="mt-[4px] flex flex-col pl-[2px] text-[#0078d7]">
          {bold.map((t, i) => (
            <div key={t} className={`flex h-[19px] shrink-0 items-center pl-1 font-bold tracking-[0.17px] ${i === 0 ? 'bg-[#0078d7] text-white' : i === 10 ? 'bg-[#008080] text-white' : ''}`}><span className="flex-1">{t}</span><div className={`mr-[35px] h-[5px] w-[5px] rounded-full ${i === 0 || i === 10 ? 'bg-white' : 'bg-black'}`} /></div>
          ))}
          {plain.map((t) => <div key={t} className="flex h-[19px] shrink-0 items-center pl-1 tracking-[0.2px]">{t}</div>)}
        </div>
      </div>
      <div className="flex flex-1 justify-center bg-[#f0f0f0] pt-[17px]"><div className="h-[268px] w-px bg-[#777]" /></div>
    </div>
  </div>
);

const Grip = ({ className = '' }: { className?: string }) => (
  <div className={`flex flex-col gap-[3px] ${className}`}>{[0, 1, 2, 3].map((i) => <div key={i} className="h-[2px] w-[2px] bg-[#aaa]" />)}</div>
);
const Coord = ({ l, v, className = '' }: { l: string; v: string; className?: string }) => (
  <div className={`flex items-center ${className}`}><span className="w-[22px] text-center text-[15px] font-bold">{l}</span><div className="flex h-[21px] w-[119px] items-center border border-[#a8a8b4] bg-white pl-[5px] text-[12px] tracking-[-0.2px] text-[#777]">{v}</div></div>
);

const Bottom = () => (
  <div className="relative flex h-[63px] shrink-0 flex-col border-b border-[#222]">
    <div className="flex h-[29px] shrink-0 bg-[#d6d6d6]">
      <div className="flex w-[939px] items-center bg-[#f0f0f0] pt-[3px]">
        <Grip className="ml-[2px]" /><I n="back" className="ml-[4px]" /><Arr className="ml-[3px] text-black" /><I n="fwd" className="ml-[3px]" /><Arr className="ml-[4px] text-[#666]" /><I n="stack" className="ml-[3px]" /><Arr className="ml-[4px] text-black" />
        <Combo className="ml-[5px] h-[22px] w-[167px] rounded-[3px] border-[#c4c4c4] bg-[#fafafa]" arrow="text-black mr-[5px]"><I n="viewgrp" className="mr-[3px]" /><span className="text-[12px] tracking-[0.25px]">3D Metric Design</span></Combo>
        <Sep className="ml-1" /><I n="viewgrp" className="ml-[4px]" /><Sep className="ml-[2px]" />
        <div className="flex pl-px">{[1, 2, 3, 4, 5, 6, 7, 8].map((n) => <div key={n} className={`flex h-[22px] w-[18px] items-center justify-center border-r border-[#333] ${n === 1 ? 'border-t border-b border-l border-[#2d6cae] bg-[#7fb3e6]' : ''}`}>{n}</div>)}</div>
        <Grip className="ml-[7px]" /><I n="bug" className="ml-[6px]" /><Grip className="ml-[7px]" />
        <Coord l="X" v="361577.227" /><Sep className="ml-1" /><Coord l="Y" v="3254954.459" /><Sep className="ml-[5px]" /><Coord l="Z" v="189.931" />
      </div>
    </div>
    <div className="flex flex-1 items-center pt-[4px] whitespace-nowrap">
      <span className="ml-[3px] w-[567px] tracking-[0.3px]">Element Selection &gt; Identify element to add to set</span>
      <Grip /><Sep className="ml-px h-7" /><I n="infoB" className="ml-[8px]" /><Sep className="ml-[6px] h-6" />
      <span className="ml-[2px] w-[635px] tracking-[0.2px]">Line String, Level: 3-断面-高程</span>
      <I n="snap" className="mt-3" />
      <div className="mt-1 ml-5 h-[2px] w-3 bg-[#333]" />
      <span className="-mt-px ml-[28px] w-[133px] tracking-[0.2px]">断面-高程</span><Sep className="h-6 bg-[#666]" /><Sep className="ml-[132px] h-6 bg-[#666]" />
      <span className="ml-1 w-[212px] tracking-[0.22px]">361577.227, 3254954.459, 189.931</span><Sep className="h-6 bg-[#666]" /><Sep className="ml-[34px] bg-[#ccc]" /><I n="note" className="ml-[8px]" /><Sep className="ml-[6px] bg-[#ccc]" /><I n="shield" className="ml-[9px]" />
    </div>
    <div className="absolute top-[3px] left-[941px] flex h-[46px] w-[400px] items-center border border-[#e2e2e2] bg-[#f0f0f0] pl-[13px] shadow-sm">
      <Combo className="h-[21px] w-[128px] rounded-[3px] border-[#b8b8b8] bg-[#fafafa] pl-1 tracking-[0.3px]" arrow="text-black mr-[5px]">Absolute (xy=)</Combo>
      <div className="ml-[10px] h-[21px] w-[235px] border border-[#a8a8b4] bg-white" />
    </div>
  </div>
);

const cnX = ['left-[71px]', 'left-[532px]', 'left-[993px]', 'left-[1454px]', 'left-[1914px]'];
const enX = ['left-[328px]', 'left-[789px]', 'left-[1249px]', 'left-[1710px]'];
const mark = 'absolute -translate-x-1/2 -translate-y-1/2 -rotate-45 leading-none font-bold whitespace-nowrap text-white/33 [-webkit-text-stroke:0.6px_rgba(0,0,0,0.14)]';
const Watermark = () => (
  <div className="pointer-events-none absolute inset-0 z-50 overflow-hidden">
    {['top-[365px]', 'top-[826px]'].map((y) => cnX.map((x) => <span key={x + y} className={`${mark} text-[38.500px] tracking-[2px] ${x} ${y}`}>测量老覃</span>))}
    {['top-[113px]', 'top-[574px]', 'top-[1034px]'].map((y) => enX.map((x) => <span key={x + y} className={`${mark} text-[38.500px] ${x} ${y}`}>blog.cehui.ren</span>))}
  </div>
);

export default function App() {
  return (
    <div className="relative flex h-[1079px] w-[1920px] flex-col overflow-hidden border-x border-[#0078d7] bg-[#f0f0f0] font-['Open_Sans','Noto_Sans_CJK_SC',sans-serif] text-[12px] leading-[16px] text-[#111]">
      <TitleBar />
      <Tabs />
      <Ribbon />
      <div className="flex min-h-0 flex-1">
        <div className="flex min-w-0 flex-1 flex-col"><ViewTitle /><ViewTools /><Canvas /></div>
        <LevelPanel />
      </div>
      <Bottom />
      <Watermark />
    </div>
  );
}
